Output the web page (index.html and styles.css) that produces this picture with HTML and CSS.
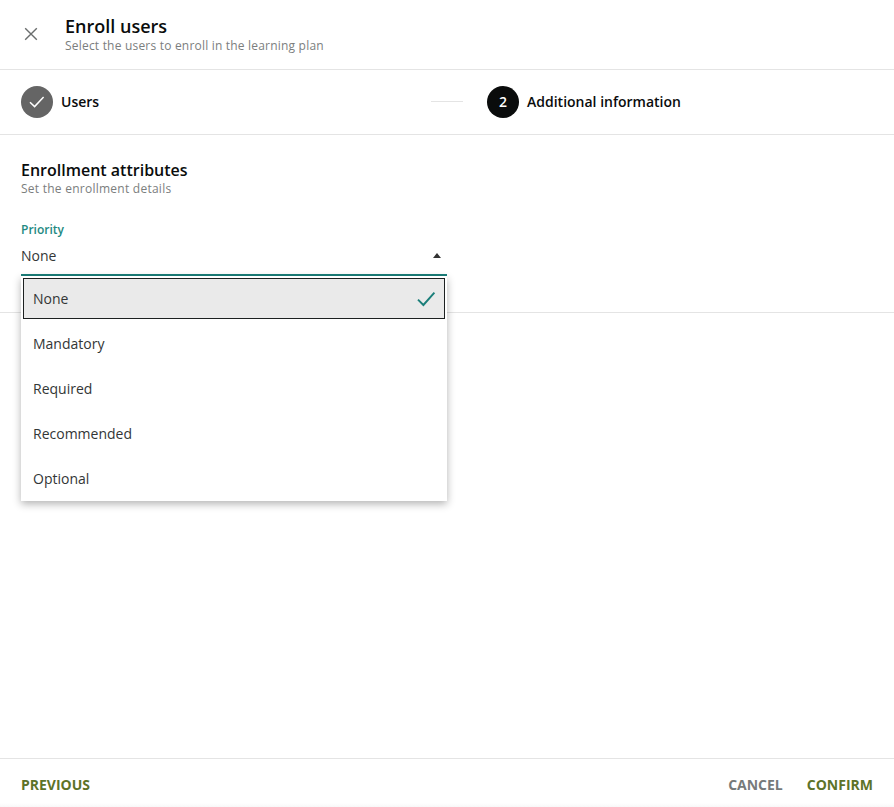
FILE: index.html
```html
<!DOCTYPE html>
<html lang="en">
<head>
<meta charset="utf-8">
<title>Enroll users</title>
<link rel="stylesheet" href="styles.css">
</head>
<body>
<div class="page">
  <header class="header">
    <button class="close" aria-label="Close">
      <svg width="14" height="14" viewBox="0 0 14 14"><path d="M1.2 1.2 12.8 12.8M12.8 1.2 1.2 12.8" stroke="#6a6d6d" stroke-width="1.4" fill="none"/></svg>
    </button>
    <div class="titles">
      <h1 class="title">Enroll users</h1>
      <p class="subtitle">Select the users to enroll in the learning plan</p>
    </div>
  </header>
  <nav class="stepper">
    <div class="step step-first">
      <span class="badge badge-done">
        <svg width="18" height="14" viewBox="0 0 18 14"><path d="M2 7.2 6.6 11.6 15.6 2" stroke="#fff" stroke-width="1.5" fill="none"/></svg>
      </span>
      <span class="step-label">Users</span>
    </div>
    <span class="connector"></span>
    <div class="step">
      <span class="badge badge-current"><span class="badge-num">2</span></span>
      <span class="step-label">Additional information</span>
    </div>
  </nav>
  <main class="content">
    <section class="attributes">
      <h2 class="section-title">Enrollment attributes</h2>
      <p class="section-sub">Set the enrollment details</p>
      <div class="field">
        <label class="field-label">Priority</label>
        <div class="select">
          <span class="select-value">None</span>
          <span class="caret"></span>
        </div>
        <ul class="menu">
          <li class="option option-selected">None
            <svg class="option-check" width="20" height="16" viewBox="0 0 20 16"><path d="M2 8.6 7.4 14 18.4 1.6" stroke="#1b7f7a" stroke-width="1.9" fill="none"/></svg>
          </li>
          <li class="option">Mandatory</li>
          <li class="option">Required</li>
          <li class="option">Recommended</li>
          <li class="option">Optional</li>
        </ul>
      </div>
    </section>
  </main>
  <footer class="footer">
    <a class="action">PREVIOUS</a>
    <div class="footer-right">
      <a class="action action-muted">CANCEL</a>
      <a class="action">CONFIRM</a>
    </div>
  </footer>
</div>
</body>
</html>
```
FILE: styles.css
```css
* { box-sizing: border-box; }
html, body { margin: 0; height: 100%; background: #fff; }
body { font-family: "Open Sans", "Liberation Sans", sans-serif; color: #0a0c0c; overflow: hidden; }
.page { height: 807px; display: flex; flex-direction: column; }

.header { height: 70px; flex: none; display: flex; align-items: center; border-bottom: 1px solid #e4e4e4; padding-left: 24px; }
.close { width: 14px; height: 14px; padding: 0; border: 0; background: none; display: block; margin-top: -1px; }
.close svg { display: block; }
.titles { margin-left: 27px; align-self: flex-start; margin-top: 15px; }
.title { margin: 0 0 1px; font-size: 18px; line-height: 22px; font-weight: 600; }
.subtitle { margin: 0; font-size: 12px; line-height: 16px; color: #7b7e7e; font-weight: 400; letter-spacing: 0.2px; }

.stepper { height: 65px; flex: none; display: flex; align-items: center; border-bottom: 1px solid #e4e4e4; padding-left: 21px; }
.step { display: flex; align-items: center; gap: 8px; }
.step-first { width: 410px; }
.badge { width: 32px; height: 32px; border-radius: 50%; display: flex; align-items: center; justify-content: center; flex: none; color: #fff; font-size: 14px; font-weight: 600; }
.badge-num { margin-top: -2px; }
.badge-done { background: #656565; }
.badge-current { background: #0a0c0c; }
.step-label { font-size: 14px; font-weight: 600; margin-top: -2px; }
.connector { width: 32px; height: 1px; background: #e4e4e4; margin: -1px 24px 0 0; }

.content { flex: 1; min-height: 0; }
.attributes { height: 178px; border-bottom: 1px solid #e4e4e4; padding: 25px 21px 0; }
.section-title { margin: 0; font-size: 16px; line-height: 20px; font-weight: 600; }
.section-sub { margin: 0; font-size: 12px; line-height: 18px; color: #7b7e7e; letter-spacing: 0.25px; }

.field { width: 426px; margin-top: 24px; position: relative; }
.field-label { display: block; font-size: 12px; line-height: 16px; color: #248a82; font-weight: 600; }
.select { height: 38px; display: flex; align-items: center; justify-content: space-between; border-bottom: 2px solid #1b7f7a; padding: 0 6px 0 0; }
.select-value { font-size: 14px; color: #333636; margin-top: -2px; }
.caret { width: 0; height: 0; border-left: 4px solid transparent; border-right: 4px solid transparent; border-bottom: 5px solid #333; margin-top: -2px; }

.menu { position: absolute; left: 0; right: 0; top: 54px; margin: 0; padding: 2px 2px 0; list-style: none; background: #fff; box-shadow: 0 3px 8px rgba(0,0,0,0.3); height: 225px; z-index: 2; }
.option { height: 45px; display: flex; align-items: center; justify-content: space-between; padding: 0 10px; font-size: 14px; color: #333636; }
.option-selected { height: 41px; margin-bottom: 2px; background: #eaeaea; border: 1px solid #1c2020; padding: 0 8px 0 9px; }

.footer { height: 49px; flex: none; display: flex; align-items: center; justify-content: space-between; border-top: 1px solid #e4e4e4; padding: 2px 21px 0; background: linear-gradient(#fff 44px, #f8f8f8); }
.footer-right { display: flex; gap: 24px; }
.action { font-size: 14px; font-weight: 700; color: #5d7328; }
.action-muted { color: #767a7a; }
```
